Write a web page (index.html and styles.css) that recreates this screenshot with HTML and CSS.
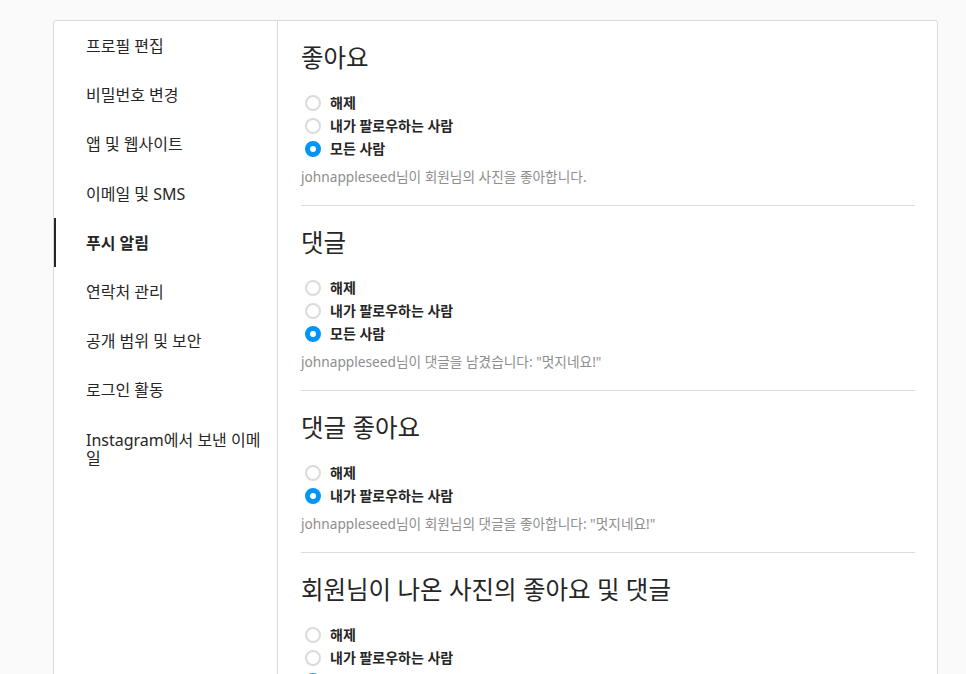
FILE: index.html
```html
<!DOCTYPE html>
<html lang="ko">
<head>
<meta charset="utf-8">
<title>푸시 알림</title>
<link rel="stylesheet" href="styles.css">
</head>
<body>
<div class="page">
  <div class="card">
    <ul class="nav">
      <li class="nav-item">프로필 편집</li>
      <li class="nav-item">비밀번호 변경</li>
      <li class="nav-item">앱 및 웹사이트</li>
      <li class="nav-item">이메일 및 SMS</li>
      <li class="nav-item active">푸시 알림</li>
      <li class="nav-item">연락처 관리</li>
      <li class="nav-item">공개 범위 및 보안</li>
      <li class="nav-item">로그인 활동</li>
      <li class="nav-item">Instagram에서 보낸 이메일</li>
    </ul>
    <main class="main">
      <section class="section">
        <h2 class="title">좋아요</h2>
        <div class="options">
          <div class="option"><span class="radio"></span><span class="label">해제</span></div>
          <div class="option"><span class="radio"></span><span class="label">내가 팔로우하는 사람</span></div>
          <div class="option"><span class="radio checked"></span><span class="label">모든 사람</span></div>
        </div>
        <p class="desc">johnappleseed님이 회원님의 사진을 좋아합니다.</p>
      </section>
      <section class="section">
        <h2 class="title">댓글</h2>
        <div class="options">
          <div class="option"><span class="radio"></span><span class="label">해제</span></div>
          <div class="option"><span class="radio"></span><span class="label">내가 팔로우하는 사람</span></div>
          <div class="option"><span class="radio checked"></span><span class="label">모든 사람</span></div>
        </div>
        <p class="desc">johnappleseed님이 댓글을 남겼습니다: "멋지네요!"</p>
      </section>
      <section class="section">
        <h2 class="title">댓글 좋아요</h2>
        <div class="options">
          <div class="option"><span class="radio"></span><span class="label">해제</span></div>
          <div class="option"><span class="radio checked"></span><span class="label">내가 팔로우하는 사람</span></div>
        </div>
        <p class="desc">johnappleseed님이 회원님의 댓글을 좋아합니다: "멋지네요!"</p>
      </section>
      <section class="section">
        <h2 class="title">회원님이 나온 사진의 좋아요 및 댓글</h2>
        <div class="options">
          <div class="option"><span class="radio"></span><span class="label">해제</span></div>
          <div class="option"><span class="radio"></span><span class="label">내가 팔로우하는 사람</span></div>
          <div class="option"><span class="radio checked"></span><span class="label">모든 사람</span></div>
        </div>
        <p class="desc">johnappleseed님이 회원님이 나온 사진에 댓글을 남겼습니다.</p>
      </section>
    </main>
  </div>
</div>
</body>
</html>
```
FILE: styles.css
```css
html, body {
  margin: 0;
  padding: 0;
  background: #fafafa;
  font-family: "Noto Sans", "Noto Sans CJK KR", sans-serif;
  color: #262626;
}

.page {
  padding: 20px 28px 0 53px;
}

.card {
  display: flex;
  background: #fff;
  border: 1px solid #dbdbdb;
  border-radius: 3px;
  min-height: 800px;
}

.nav {
  list-style: none;
  margin: 0;
  padding: 0;
  width: 224px;
  flex: 0 0 224px;
  border-right: 1px solid #dbdbdb;
  box-sizing: border-box;
}

.nav-item {
  border-left: 2px solid transparent;
  padding: 16px 12px 15.2px 30px;
  font-size: 16px;
  line-height: 18px;
  color: #262626;
}

.nav-item.active {
  border-left-color: #262626;
  font-weight: 700;
}

.main {
  flex: 1;
  padding: 0 22px 0 23px;
}

.section {
  padding: 23px 0 19px;
  border-bottom: 1px solid #dbdbdb;
}

.title {
  margin: 0;
  font-size: 24.5px;
  font-weight: 400;
  line-height: 28px;
  color: #262626;
}

.options {
  margin-top: 19px;
}

.option {
  display: flex;
  align-items: center;
  height: 23px;
}

.radio {
  box-sizing: border-box;
  width: 16px;
  height: 16px;
  margin-left: 4px;
  margin-right: 9px;
  border: 2px solid #dbdbdb;
  border-radius: 50%;
  background: #fff;
}

.radio.checked {
  border: 5px solid #0095f6;
}

.label {
  font-size: 14px;
  font-weight: 700;
  line-height: 18px;
  color: #262626;
}

.desc {
  margin: 8px 0 0;
  font-size: 13.7px;
  line-height: 18px;
  color: #8e8e8e;
}
```
